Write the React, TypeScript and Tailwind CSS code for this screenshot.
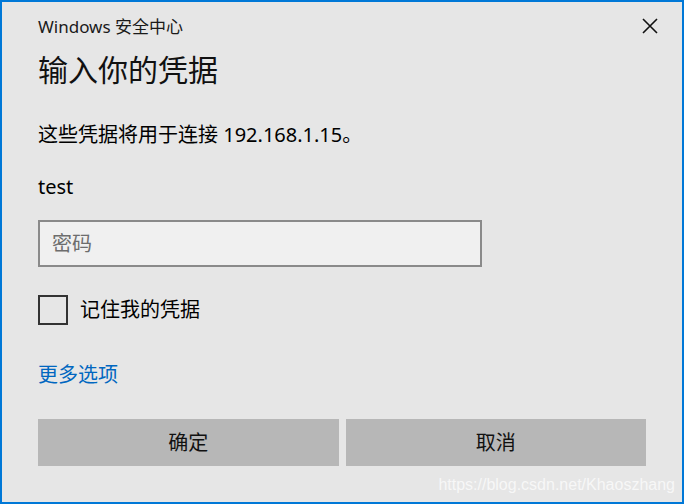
import React from 'react';

const font = { fontFamily: '"Noto Sans", "Noto Sans CJK SC", sans-serif' };

export default function App() {
  return (
    <div
      className="relative w-[684px] h-[504px] border-2 border-[#0078d7] bg-[#e6e6e6] text-[#000] flex flex-col pl-[36px] pr-[36px]"
      style={font}
    >
      {/* header */}
      <div className="flex items-center justify-between h-[48px] -mr-[36px]">
        <span className="text-[17px] leading-none text-[#1a1a1a]">Windows 安全中心</span>
        <button className="w-[64px] h-[48px] flex items-center justify-center">
          <svg width="16" height="16" viewBox="0 0 16 16" stroke="#111" strokeWidth="1.6" fill="none">
            <path d="M1 1 L15 15 M15 1 L1 15" />
          </svg>
        </button>
      </div>

      <h1 className="text-[30px] leading-none mt-[5px] text-[#111]">输入你的凭据</h1>

      <p className="text-[20px] leading-none mt-[40px]">这些凭据将用于连接 192.168.1.15。</p>

      <p className="text-[20px] leading-none mt-[32px]">test</p>

      <div className="mt-[23px] w-[444px] h-[47px] border-2 border-[#8a8a8a] bg-[#f0f0f0] flex items-center pl-[12px]">
        <span className="text-[20px] leading-none text-[#6d6d6d]">密码</span>
      </div>

      <div className="mt-[28px] flex items-center gap-[12px]">
        <div className="w-[30px] h-[30px] border-2 border-[#333]" />
        <span className="text-[20px] leading-none">记住我的凭据</span>
      </div>

      <a className="mt-[40px] text-[20px] leading-none text-[#0067c0]">更多选项</a>

      <div className="mt-[34px] flex gap-[7px]">
        <button className="w-[301px] h-[47px] bg-[#b7b7b7] text-[20px] text-[#111]">确定</button>
        <button className="w-[301px] h-[47px] bg-[#b7b7b7] text-[20px] text-[#111]">取消</button>
      </div>

      <span
        className="absolute right-[7px] bottom-[9px] text-[16px] leading-none text-white/70"
        style={{ fontFamily: '"Liberation Sans", Arial, sans-serif' }}
      >
        https://blog.csdn.net/Khaoszhang
      </span>
    </div>
  );
}
